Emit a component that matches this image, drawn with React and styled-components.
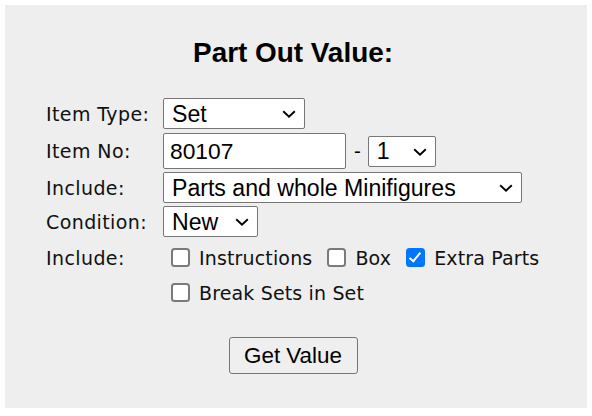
import React from 'react';
import styled, {createGlobalStyle} from 'styled-components';

const GlobalStyle = createGlobalStyle`
  body {
    margin: 5px;
    background: #fff;
    font-family: "DejaVu Sans", Verdana, sans-serif;
    color: #000;
  }
`;

const Panel = styled.div`
  display: flex;
  flex-direction: column;
  align-items: center;
  width: 576px;
  height: 371px;
  padding: 32px 7px 0 0;
  background: #eeeeee;
`;

const Title = styled.h2`
  margin: 0;
  font-family: "Liberation Sans", Arial, sans-serif;
  font-weight: bold;
  font-size: 27.9px;
  line-height: 32px;
`;

const Form = styled.div`
  display: grid;
  grid-template-columns: 117px auto;
  row-gap: 3px;
  align-self: flex-start;
  margin: 29px 0 0 41px;
`;

const Label = styled.div`
  display: flex;
  align-items: center;
  align-self: ${p => (p.top ? 'start' : 'center')};
  height: ${p => (p.top ? '35px' : 'auto')};
  font-size: 19px;
  letter-spacing: 0.4px;
  color: #111;
`;

const Cell = styled.div`
  display: flex;
  align-items: center;
  margin-top: ${p => p.mt || 0}px;
`;

const SelectWrap = styled.div`
  position: relative;
  display: inline-flex;
`;

const Select = styled.select`
  appearance: none;
  width: ${p => p.w}px;
  height: 31px;
  padding: 0 0 0 8px;
  border: 1px solid #767676;
  border-radius: 2px;
  background: #fff;
  font-family: "Liberation Sans", Arial, sans-serif;
  font-size: 23.1px;
  color: #000;
  outline: none;
`;

const Chevron = styled.svg`
  position: absolute;
  right: 9px;
  top: 12px;
  pointer-events: none;
`;

const TextInput = styled.input`
  box-sizing: border-box;
  width: 183px;
  height: 36px;
  padding: 0 0 0 6px;
  border: 1px solid #767676;
  border-radius: 2px;
  background: #fff;
  font-family: "Liberation Sans", Arial, sans-serif;
  font-size: 22.8px;
  color: #000;
  outline: none;
`;

const Dash = styled.span`
  margin: 0 7px 0 8px;
  font-size: 19px;
`;

const Checks = styled.div`
  display: flex;
  flex-direction: column;
  padding-left: 8px;
`;

const CheckLine = styled.div`
  display: flex;
  align-items: center;
  gap: 15px;
  height: 35px;
`;

const CheckItem = styled.label`
  display: flex;
  align-items: center;
  gap: 9px;
  font-size: 19px;
  letter-spacing: 0.15px;
  color: #111;
`;

const Box = styled.input`
  appearance: none;
  position: relative;
  flex: none;
  box-sizing: border-box;
  width: 19px;
  height: 19px;
  margin: 0;
  border: 2px solid #7a7a7a;
  border-radius: 3.5px;
  background: #fff;

  &:checked {
    border-color: #0075ff;
    background: #0075ff;
  }

  &:checked::after {
    content: "";
    position: absolute;
    left: 4px;
    top: 0px;
    width: 4px;
    height: 10px;
    border: solid #fff;
    border-width: 0 2.6px 2.6px 0;
    transform: rotate(40deg);
  }
`;

const Button = styled.button`
  width: 129px;
  height: 37px;
  margin-top: 27px;
  border: 1px solid #767676;
  border-radius: 3px;
  background: #efefef;
  font-family: "Liberation Sans", Arial, sans-serif;
  font-size: 22.4px;
  color: #000;
`;

const Dropdown = ({w, value, options}) => (
  <SelectWrap>
    <Select w={w} defaultValue={value}>
      {options.map(o => <option key={o}>{o}</option>)}
    </Select>
    <Chevron width="14" height="8" viewBox="0 0 14 8">
      <path d="M1.2 1.2 L7 6.6 L12.8 1.2" fill="none" stroke="#000" strokeWidth="1.9"/>
    </Chevron>
  </SelectWrap>
);

const Check = ({text, checked}) => (
  <CheckItem>
    <Box type="checkbox" defaultChecked={checked}/>
    {text}
  </CheckItem>
);

export default function App() {
  return (
    <>
      <GlobalStyle/>
      <Panel>
        <Title>Part Out Value:</Title>
        <Form>
          <Label>Item Type:</Label>
          <Cell>
            <Dropdown w={142} value="Set" options={['Set', 'Part', 'Minifigure', 'Gear']}/>
          </Cell>

          <Label>Item No:</Label>
          <Cell mt={1}>
            <TextInput defaultValue="80107"/>
            <Dash>-</Dash>
            <Dropdown w={68} value="1" options={['1', '2', '3']}/>
          </Cell>

          <Label>Include:</Label>
          <Cell>
            <Dropdown w={359} value="Parts and whole Minifigures"
                      options={['Parts and whole Minifigures', 'Parts only']}/>
          </Cell>

          <Label>Condition:</Label>
          <Cell>
            <Dropdown w={95} value="New" options={['New', 'Used']}/>
          </Cell>

          <Label top>Include:</Label>
          <Checks>
            <CheckLine>
              <Check text="Instructions"/>
              <Check text="Box"/>
              <Check text="Extra Parts" checked/>
            </CheckLine>
            <CheckLine>
              <Check text="Break Sets in Set"/>
            </CheckLine>
          </Checks>
        </Form>
        <Button>Get Value</Button>
      </Panel>
    </>
  );
}
